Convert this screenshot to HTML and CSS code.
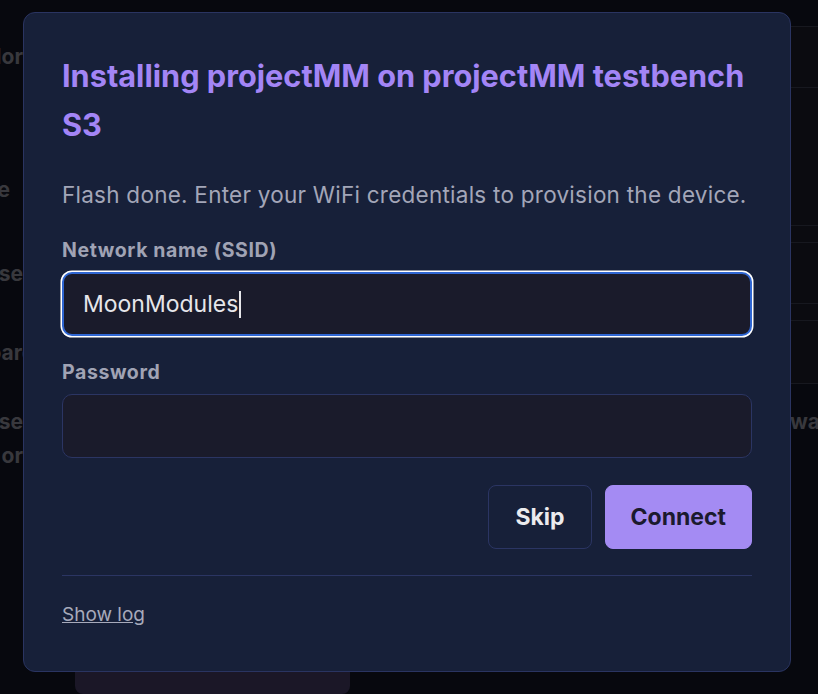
FILE: index.html
```html
<!DOCTYPE html>
<html>
    <head>

        <title>Install projectMM</title>

        <link rel="stylesheet" href="styles.css">

    </head>
    <body>

        <div class="page">

            <div class="side">
                <div class="side-item first">Vendor</div>
                <div class="side-item short">Type</div>
                <div class="side-item">Release</div>
                <div class="side-item under">Board</div>
                <div class="side-item">Release</div>
                <div class="side-item tight">Flash or</div>
            </div>

            <div class="content">
                <div class="table">
                    <div class="row">&nbsp;</div>
                    <div class="row tall">&nbsp;</div>
                    <div class="row thin">&nbsp;</div>
                    <div class="row">&nbsp;</div>
                    <div class="row thin">&nbsp;</div>
                    <div class="row wide">&nbsp;</div>
                </div>
                <div class="note">Firmware</div>
            </div>

            <div class="footer-card"></div>

        </div>

        <div class="overlay">

            <div class="dialog">

                <h2 class="title">Installing projectMM on projectMM testbench S3</h2>

                <p class="message">Flash done. Enter your WiFi credentials to provision the device.</p>

                <label class="label" for="ssid">Network name (SSID)</label>
                <div class="field focused">
                    <span class="value">MoonModules</span><span class="caret"></span>
                </div>

                <label class="label" for="password">Password</label>
                <input class="field" id="password" type="password">

                <div class="actions">
                    <button class="button secondary">Skip</button>
                    <button class="button primary">Connect</button>
                </div>

                <div class="divider"></div>

                <a class="log-link" href="#">Show log</a>

            </div>

        </div>

    </body>
</html>
```

FILE: styles.css
```css
/** Page **/
html, body {
    margin: 0;
    height: 100%;
}
body {
    background-color: #07080e;
    font-family: Inter, "Noto Sans", sans-serif;
    overflow: hidden;
}

/** Background content **/
.page {
    position: relative;
    display: flex;
    height: 100%;
}
.side {
    flex-shrink: 0;
    width: 200px;
    margin-left: -177px;
    text-align: right;
    font-size: 21px;
    font-weight: bold;
    color: #38383d;
}
.side-item {
    margin-top: 46px;
    line-height: 34px;
}
.side-item.first {
    margin-top: 40px;
}
.side-item.short {
    margin-top: 99px;
    padding-right: 13px;
}
.side-item:nth-child(3) {
    margin-top: 50px;
}
.side-item.under {
    margin-top: 45px;
    margin-right: -12px;
}
.side-item:nth-child(5) {
    margin-top: 35px;
}
.side-item.tight {
    margin-top: 0;
}
.content {
    flex: 1;
    min-width: 0;
    margin-left: 560px;
    margin-top: 26px;
}
.table {
    background-color: #0b0b10;
    border-bottom: 1px solid #17181f;
}
.row {
    border-top: 1px solid #17181f;
    height: 60px;
}
.row.tall {
    height: 137px;
}
.row.thin {
    height: 16px;
}
.row.wide {
    height: 62px;
}
.note {
    padding-left: 161px;
    line-height: 76px;
    font-size: 21px;
    font-weight: bold;
    white-space: nowrap;
    color: #38383d;
}
.footer-card {
    position: absolute;
    left: 75px;
    top: 640px;
    width: 275px;
    height: 54px;
    border-radius: 8px;
    background-color: #1b1727;
}

/** Overlay **/
.overlay {
    position: fixed;
    top: 0;
    left: 0;
    right: 0;
    bottom: 0;
    padding: 12px 0 0 23px;
}

/** Dialog **/
.dialog {
    width: 768px;
    box-sizing: border-box;
    padding: 38px 38px 42px 38px;
    background-color: #172039;
    border: 1px solid #2a3461;
    border-radius: 12px;
}
.title {
    margin: 0;
    font-size: 30.7px;
    line-height: 49px;
    font-weight: bold;
    color: #a385f6;
}
.message {
    margin: 31px 0 0 0;
    font-size: 22.5px;
    line-height: 30px;
    letter-spacing: 0.25px;
    color: #a3a6b8;
}
.label {
    display: block;
    margin-top: 26px;
    font-size: 19.5px;
    line-height: 28px;
    letter-spacing: 0.6px;
    font-weight: bold;
    color: #a0a3b4;
}
.label + .field {
    margin-top: 8px;
}
.field + .label {
    margin-top: 22px;
}
.field {
    display: block;
    width: 100%;
    height: 64px;
    box-sizing: border-box;
    padding: 0 20px;
    background-color: #1a1b2b;
    border: 1px solid #2b3563;
    border-radius: 10px;
    font-family: Inter, "Noto Sans", sans-serif;
    font-size: 23px;
    color: #e6e6ea;
    outline: none;
}
.field.focused {
    display: flex;
    align-items: center;
    border: 2px solid #2f66d2;
    box-shadow: 0 0 0 1.5px #ffffff;
    padding-left: 19px;
}
.caret {
    width: 1.5px;
    height: 27px;
    margin-left: 1px;
    background-color: #e6e6ea;
}

/** Actions **/
.actions {
    display: flex;
    justify-content: flex-end;
    gap: 13px;
    margin-top: 27px;
}
.button {
    height: 64px;
    padding: 0 26px;
    border-radius: 8px;
    font-family: Inter, "Noto Sans", sans-serif;
    font-size: 23px;
    font-weight: bold;
    cursor: pointer;
}
.button.secondary {
    background-color: transparent;
    border: 1px solid #2b3563;
    color: #ebebee;
}
.button.primary {
    padding: 0 25px;
    background-color: #a48bf3;
    border: 1px solid #a48bf3;
    color: #1b1a2e;
}
.divider {
    margin-top: 26px;
    border-top: 1px solid #2b3563;
}
.log-link {
    display: inline-block;
    margin-top: 25px;
    font-size: 19px;
    line-height: 28px;
    color: #a7aabb;
}
```
